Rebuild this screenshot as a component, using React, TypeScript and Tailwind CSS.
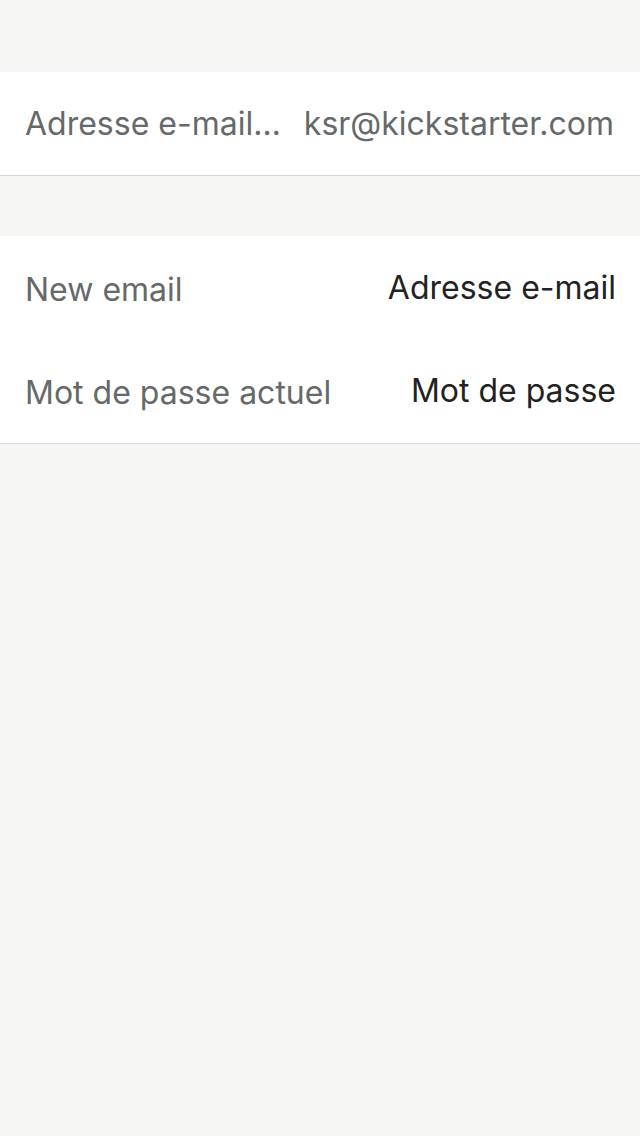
import React from "react";

const rows = [
  { label: "New email", placeholder: "Adresse e-mail", height: "h-[103px]" },
  { label: "Mot de passe actuel", placeholder: "Mot de passe", height: "h-[104px]" },
];

export default function App() {
  return (
    <div
      className="min-h-[1136px] w-[640px] bg-[#f6f6f4] pt-[72px]"
      style={{ fontFamily: "Inter, 'Noto Sans', sans-serif" }}
    >
      {/* Current email */}
      <div className="flex h-[104px] items-center justify-between border-b border-[#d9d9d9] bg-white pl-[25px] pr-[26px] text-[32px] text-[#656969]">
        <span>Adresse e-mail…</span>
        <span>ksr@kickstarter.com</span>
      </div>

      {/* Change form */}
      <div className="mt-[60px] border-b border-[#d9d9d9] bg-white">
        {rows.map((row) => (
          <div
            key={row.label}
            className={`flex ${row.height} items-center justify-between pl-[25px] pr-[24px] text-[32px]`}
          >
            <span className="translate-y-[2px] text-[#656969]">{row.label}</span>
            <span className="text-[#222222]">{row.placeholder}</span>
          </div>
        ))}
      </div>
    </div>
  );
}
